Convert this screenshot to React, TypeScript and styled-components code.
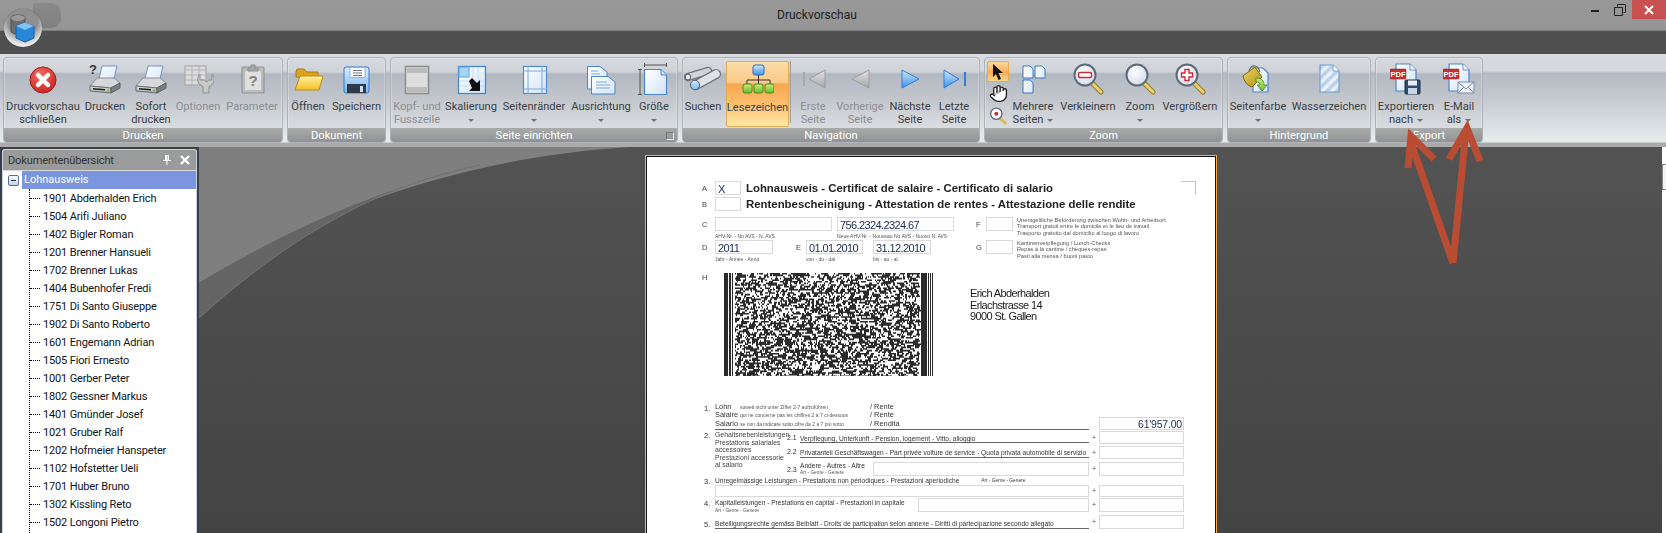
import React, { useMemo } from 'react';
import styled, { createGlobalStyle } from 'styled-components';
import { Hand } from 'lucide-react';

const Global = createGlobalStyle`
  html, body { margin: 0; padding: 0; background: #505050; overflow: hidden; }
  * { box-sizing: border-box; }
`;

const UI = `Roboto, "Liberation Sans", sans-serif`;
const DOC = `"Liberation Sans", Arial, sans-serif`;

const Win = styled.div`position: relative; width: 1666px; height: 533px; overflow: hidden; display: flex; flex-direction: column; font-family: ${UI}; background: #505050;`;
const TitleBar = styled.div`height: 31px; flex: none; display: flex; align-items: flex-start; background: linear-gradient(#989898, #959595); border-bottom: 1px solid #7c7c7c; position: relative;`;
const Title = styled.div`margin-left: 777px; width: 90px; margin-top: 7px; font-size: 12px; line-height: 16px; color: #1e1e1e;`;
const WinControls = styled.div`margin-left: auto; display: flex; align-items: flex-start;`;
const WinBtn = styled.div`width: 25px; height: 19px; display: flex; align-items: center; justify-content: center;`;
const CloseBtn = styled(WinBtn)`width: 34px; background: #c75050;`;
const Strip = styled.div`height: 23px; flex: none; background: #505050;`;
const Ribbon = styled.div`height: 93px; flex: none; display: flex; gap: 4px; padding: 3px 0 0 3px; background: linear-gradient(#d8dbe0 0, #d5d8dd 17px, #b4bac4 19px, #c6cad0 45px, #dfe5e6 78px, #e6ecea 88px, #a9abab 89px, #a9abab 93px);`;
const Group = styled.div<{ $w: number }>`width: ${p => p.$w}px; height: 86px; flex: none; display: flex; flex-direction: column; position: relative; border: 1px solid #aeb2b8; border-radius: 4px; overflow: hidden; box-shadow: inset 0 0 0 1px rgba(255,255,255,.25); background: linear-gradient(#d6d8dc 0, #cfd2d7 14px, #b2b8c2 16px, #c2c6cc 40px, #dadde0 70px);`;
const GroupBody = styled.div`height: 70px; flex: none; display: flex; align-items: stretch;`;
const GroupFooter = styled.div`height: 15px; flex: none; display: flex; align-items: center; justify-content: center; background: linear-gradient(#a9abab, #8f9191); color: #fff; font-size: 11.2px; line-height: 15px; position: relative;`;
const Launcher = styled.span`position: absolute; right: 3px; top: 4px; width: 8px; height: 8px; border: 1px solid #e8e8e8; border-top-color: #777; border-left-color: #777;`;
const Btn = styled.div<{ $w: number; $off?: boolean; $on?: boolean }>`
  width: ${p => p.$w}px; flex: none; display: flex; flex-direction: column; align-items: center;
  padding-top: ${p => p.$on ? 2 : 5}px; margin: ${p => p.$on ? '3px 0 1px 0' : '0'};
  color: ${p => p.$off ? '#8b8e93' : '#3b3e44'};
  font-size: 11.1px; line-height: 13px; white-space: nowrap; text-align: center;
  ${p => p.$on ? `border: 1px solid #e3ac4e; border-radius: 2px; background: linear-gradient(#fddcaa 0, #fbc987 33%, #f8a64e 34%, #fbbf6d 65%, #ffe9a8 100%);` : ''}
`;
const IconSlot = styled.div`height: 37px; width: 100%; flex: none; display: flex; justify-content: center; align-items: flex-start;`;
const Caret = styled.span<{ $inline?: boolean }>`display: inline-block; width: 0; height: 0; border: 3px solid transparent; border-top: 3px solid #6f7278; border-bottom: 0; vertical-align: middle; margin-left: ${p => p.$inline ? 4 : 0}px;`;
const Sep = styled.div`width: 1px; margin: 3px 1px 5px 1px; background: #9da2aa; flex: none;`;
const Spacer = styled.div`width: 3px; flex: none;`;
const Tools = styled.div`width: 22px; margin: 3px 2px 0 2px; flex: none; display: flex; flex-direction: column; gap: 1px;`;
const Tool = styled.div<{ $on?: boolean }>`height: 21px; display: flex; align-items: center; justify-content: center; ${p => p.$on ? `border: 1px solid #e3ac4e; border-radius: 2px; background: linear-gradient(#fdd79e, #f9ad58 55%, #fdd68e);` : ''}`;

const Main = styled.div`flex: 1; min-height: 0; display: flex; background: #3c3f43;`;
const Panel = styled.div`width: 195px; margin: 2px 2px 0 2px; flex: none; background: #fff; border: 1px solid #c8d2e2; border-bottom: 0; border-radius: 3px 3px 0 0; display: flex; flex-direction: column; overflow: hidden;`;
const PanelHead = styled.div`height: 21px; flex: none; display: flex; align-items: center; padding: 0 6px 0 5px; background: #9a9c9b; color: #333; font-size: 11px; letter-spacing: -0.1px; border-bottom: 1px solid #d9d9d9; gap: 8px;`;
const PanelTitle = styled.span`flex: 1;`;
const Root = styled.div`height: 18px; flex: none; display: flex; align-items: center; padding-left: 5px; `;
const Expand = styled.span`width: 11px; height: 11px; flex: none; border: 1px solid #5a6f92; border-radius: 2px; background: linear-gradient(#fff, #c4d0e6); display: flex; align-items: center; justify-content: center;`;
const Minus = styled.span`width: 5px; height: 1px; background: #20304f;`;
const RootLabel = styled.span`margin-left: 3px; flex: 1; height: 18px; line-height: 18px; padding-left: 2px; background: #7b96de; color: #fff; font-size: 11px;`;
const Tree = styled.div`flex: 1; margin-left: 26px; border-left: 1px dotted #000;`;
const Row = styled.div`height: 18px; display: flex; align-items: center; color: #10131a; font-size: 11px; letter-spacing: -0.15px; white-space: nowrap;`;
const Dots = styled.span`width: 10px; margin-right: 3px; border-top: 1px dotted #000; flex: none;`;

const Canvas = styled.div`flex: 1; min-width: 0; position: relative; overflow: hidden; background: linear-gradient(#535353, #434343);`;
const Swoosh = styled.svg`position: absolute; left: 0; top: 0;`;
const Track = styled.div`width: 4px; flex: none; background: #fff; padding-top: 17px;`;
const Thumb = styled.div`height: 26px; border: 1px solid #8a8a8a; border-right: 0; background: #f4f4f4;`;

const Page = styled.div`position: relative; margin: 8px 0 0 446px; width: 572px; height: 420px; background: #fff; border: 1px solid #f6ab55; box-shadow: inset 0 0 0 1px #151515; padding: 25px 0 0 56px; color: #333; font-family: ${DOC}; overflow: hidden;`;
const Ink = styled.div`filter: blur(0.3px);`;
const CornerMark = styled.span`position: absolute; left: 535px; top: 25px; width: 15px; height: 13px; border-top: 1px solid #c4c4c4; border-right: 1px solid #c4c4c4;`;
const HeadRow = styled.div`display: flex; height: 14px; margin-bottom: 2px; align-items: center;`;
const Letter = styled.span<{ $w?: number; $ml?: number }>`width: ${p => p.$w ?? 13}px; margin-left: ${p => p.$ml ?? 0}px; flex: none; font-size: 7.5px; color: #444; align-self: center;`;
const Cell = styled.div<{ $w?: number; $h?: number; $mt?: number; $ml?: number }>`
  ${p => p.$w ? `width:${p.$w}px;` : ''} height: ${p => p.$h ?? 14}px; margin-top: ${p => p.$mt ?? 0}px; margin-left: ${p => p.$ml ?? 0}px;
  flex: none; border: 1px solid #d9d9d9; background: #fff; color: #1c2a52;
  font-size: 11px; line-height: 15px; letter-spacing: -0.6px; padding-left: 2px; white-space: nowrap;
`;
const Heading = styled.div`margin-left: 5px; font-weight: bold; font-size: 11.4px; color: #222; white-space: nowrap;`;
const FieldsRow = styled.div`display: flex; height: 23px; margin-top: 6px; align-items: flex-start;`;
const FieldsRowTight = styled(FieldsRow)`margin-top: 0;`;
const Field = styled.div<{ $w: number; $ml?: number }>`width: ${p => p.$w}px; margin-left: ${p => p.$ml ?? 0}px; flex: none;`;
const Sub = styled.div`font-size: 5px; line-height: 8px; margin-top: 1px; white-space: nowrap; color: #555;`;
const Note = styled.div`margin-left: 4px; font-size: 5.7px; line-height: 6.4px; color: #555; white-space: nowrap;`;
const SideLetter = styled(Letter)`margin-top: 3px; align-self: flex-start;`;
const BarRow = styled.div`display: flex; margin-top: 10px; align-items: flex-start;`;
const BarLetter = styled(Letter)`align-self: flex-start;`;
const Address = styled.div`margin: 15px 0 0 36px; font-size: 11px; line-height: 11.5px; letter-spacing: -0.62px; color: #1a1a1a;`;

const Form = styled.div`margin: 27px 0 0 2px; display: grid; grid-template-columns: 11px 374px 10px 85px;`;
const Num = styled.div<{ $pt?: number }>`font-size: 7.6px; line-height: 9px; padding-top: ${p => p.$pt ?? 1}px;`;
const Main1 = styled.div`height: 27px; border-bottom: 1px solid #666;`;
const LohnLine = styled.div`display: flex; height: 8.3px; line-height: 8.3px; font-size: 7.4px; white-space: nowrap;`;
const Term = styled.span`width: 25px; flex: none;`;
const Tiny = styled.span`font-size: 5px; width: 130px; flex: none; color: #555;`;
const Col = styled.div`display: flex; flex-direction: column;`;
const Grow = styled(Col)`flex: 1;`;
const Plus = styled.div<{ $h?: number; $mt?: number }>`height: ${p => p.$h ?? 14}px; margin-top: ${p => p.$mt ?? 0}px; font-size: 7px; line-height: ${p => p.$h ?? 14}px; color: #555; padding-left: 3px;`;
const Amount = styled(Cell)`text-align: right; padding-right: 1px; font-size: 10.5px; letter-spacing: -0.2px; line-height: 13px;`;
const Sec2 = styled.div`display: flex;`;
const SideLabel = styled.div`width: 72px; flex: none; font-size: 6.9px; line-height: 7.5px; padding-top: 1px; white-space: nowrap; color: #444;`;
const SubRow = styled.div<{ $h: number; $mt?: number }>`display: flex; height: ${p => p.$h}px; margin-top: ${p => p.$mt ?? 0}px; font-size: 6.62px;`;
const SubNum = styled.span`width: 13px; flex: none; font-size: 7px; padding-top: 4px;`;
const Lined = styled.span`flex: 1; border-bottom: 1px solid #666; padding-top: 5px; line-height: 8px; white-space: nowrap; margin-bottom: 1px;`;
const AndereText = styled.div`width: 73px; flex: none; font-size: 6.6px; line-height: 7px;`;
const Under = styled.div`font-size: 4.8px; line-height: 7px; color: #555; white-space: nowrap;`;
const LineText = styled.div`font-size: 6.62px; line-height: 9px; white-space: nowrap; display: flex;`;
const Art = styled.span`font-size: 4.8px; margin-left: 22px;`;
const Row4 = styled.div`display: flex;`;
const Row4Text = styled.div`width: 203px; flex: none; padding-top: 1px;`;
const Main5 = styled.div`height: 15px; border-bottom: 1px solid #666; font-size: 6.62px; padding-top: 6px; line-height: 8px; white-space: nowrap;`;

const Overlay = styled.svg`position: absolute; left: 0; top: 0; pointer-events: none;`;
const OrbTab = styled.div`position: absolute; left: 33px; top: 3px; width: 28px; height: 25px; border-radius: 0 10px 10px 0; background: linear-gradient(#8a8a8a, #7f7f7f);`;
const Orb = styled.div`position: absolute; left: 4px; top: 9px; width: 38px; height: 38px; border-radius: 50%; background: radial-gradient(circle at 50% 30%, #8f8f8f 0 45%, #dedede 70%, #fff 88%, #aaa 100%); display: flex; align-items: center; justify-content: center; box-shadow: 0 0 1px #333;`;
const Defs = styled.svg`position: absolute; width: 0; height: 0;`;

const S = ({ s = 32, children }: { s?: number; children: React.ReactNode }) => (
  <svg width={s} height={s} viewBox={`0 0 ${s} ${s}`}>{children}</svg>
);
const printerBody = (
  <>
    <path d="M13 3 H28 L24 20 H9 Z" fill="url(#paper)" stroke="#6f93c8" />
    <path d="M1 23 L8 15 H25 L31 20 L22 25 Z" fill="#d6d8d9" stroke="#8c8c8c" />
    <path d="M1 23 L22 25 V30 L1 28 Z" fill="url(#greyV)" stroke="#6e6e6e" />
    <path d="M22 25 L31 20 V25 L22 30 Z" fill="#7c7e80" stroke="#5c5c5c" />
    <path d="M4 25 L16 26 V27.5 L4 26.5 Z" fill="#222" />
    <circle cx="19" cy="27.5" r="1" fill="#5fc04a" />
  </>
);
const magnifier = (inner: React.ReactNode) => (
  <S>
    <path d="M20 20 L29 29" stroke="#8a7a30" strokeWidth="5" strokeLinecap="round" />
    <path d="M20 20 L29 29" stroke="#f0cf70" strokeWidth="3" strokeLinecap="round" />
    <circle cx="13" cy="12" r="10.5" fill="url(#lens)" stroke="#5f6a78" strokeWidth="2" />
    {inner}
  </S>
);
const docPath = 'M7 2 H20 L26 8 V29 H7 Z';
const Doc = ({ d = docPath, fill = 'url(#paper)' }: { d?: string; fill?: string }) => <path d={d} fill={fill} stroke="#4b86c8" strokeWidth="1.2" />;
const PdfBadge = () => (
  <>
    <rect x="0" y="6" width="16" height="10" rx="1" fill="#c8302e" stroke="#8f1f1f" strokeWidth=".5" />
    <text x="8" y="14" textAnchor="middle" fontSize="7.5" fontWeight="bold" fontFamily="Liberation Sans" fill="#fff">PDF</text>
  </>
);

const I = {
  close: <S><circle cx="16" cy="17" r="13" fill="url(#red)" stroke="#9b1f1f" /><path d="M11 12 L21 22 M21 12 L11 22" stroke="#fff" strokeWidth="4.5" strokeLinecap="round" /></S>,
  printQ: <S>{printerBody}<text x="0" y="11" fontSize="13" fontWeight="bold" fontFamily="Liberation Sans" fill="#333">?</text></S>,
  print: <S>{printerBody}</S>,
  options: <S><rect x="3" y="3" width="21" height="19" fill="#dcdcdc" stroke="#a3a3a3" /><path d="M3 7 H24 M3 12 H24 M3 17 H24 M10 3 V22 M17 3 V22" stroke="#b3b3b3" /><path d="M18 11 a7.5 7.5 0 0 0 3 12.5 V30 h6 V23.5 a7.5 7.5 0 0 0 3 -12.5 V17 h-3.5 l-1 1.5 h-2 l-1 -1.5 H18 Z" fill="#c8c8c8" stroke="#8f8f8f" /></S>,
  param: <S><rect x="6" y="4" width="22" height="26" rx="1" fill="#bcbcbc" stroke="#949494" strokeWidth="1.2" /><rect x="9" y="8" width="16" height="19" fill="#e0e0e0" /><path d="M12 5 h3 v-3 h4 v3 h3 v3 h-10 Z" fill="#a6a6a6" stroke="#8c8c8c" /><text x="17" y="23" textAnchor="middle" fontSize="15" fontWeight="bold" fontFamily="Liberation Sans" fill="#7d7d7d">?</text></S>,
  open: <S><path d="M4 9 L5 6 H12 L15 9 H26 V14 H4 Z" fill="#dca31c" stroke="#a97a12" /><path d="M8 13 H31 L27 27 H3 Z" fill="url(#yellow)" stroke="#b98a18" /></S>,
  save: <S><rect x="3" y="4" width="25" height="26" rx="2" fill="url(#sky)" stroke="#3a78c4" /><rect x="9" y="4.5" width="15" height="10" fill="#fff" stroke="#9ab3d2" /><path d="M12 7.5 H21 M12 10 H21 M12 12.5 H21" stroke="#6a7788" /><rect x="6" y="21" width="19" height="9" fill="#2e3a4a" /><rect x="19" y="23" width="3" height="6" fill="#cfe0f2" /></S>,
  header: <S><rect x="4.5" y="3.5" width="23" height="27" fill="#dedede" stroke="#8e8e8e" strokeWidth="1.6" /><rect x="6" y="5" width="20" height="5" fill="#bcbcbc" /><rect x="6" y="24" width="20" height="5" fill="#bcbcbc" /></S>,
  scale: <S><rect x="3.5" y="3.5" width="27" height="27" fill="url(#paper)" stroke="#3f8ad0" strokeWidth="1.3" /><rect x="4" y="4" width="10" height="10" fill="#a8d4f5" stroke="#5ea2e0" /><path d="M4 18 H30 M4 23 H30 M18 4 V30 M23 4 V30" stroke="#c3def5" /><path d="M14 18 L17 15 L22 20 L25 17 V28 H14 L17 25 Z" fill="#111" /></S>,
  margins: <S><rect x="5.5" y="3.5" width="23" height="27" fill="url(#paper)" stroke="#4b8ad0" strokeWidth="1.2" /><path d="M5 8 H29 M5 26 H29 M10 3 V31 M24 3 V31" stroke="#76a8de" /></S>,
  orient: <S><path d="M2.5 3.5 H15 L22 9 V26 H2.5 Z" fill="url(#paper)" stroke="#4b86c8" /><path d="M6 8 H13 M6 11 H15" stroke="#7fa7d6" /><path d="M6.5 13.5 H23 L30 19 V31 H6.5 Z" fill="url(#paper)" stroke="#4b86c8" /><path d="M11 19 H22 M11 22 H25 M11 25 H25" stroke="#7fa7d6" /></S>,
  size: <S s={34}><path d="M7.5 0 V4 M29.5 0 V4 M7.5 2 H29.5 M1 6.5 H5 M3 6.5 V31.5 M1 31.5 H5" stroke="#555" fill="none" /><Doc d="M7.5 6.5 H24 L29.5 12 V31.5 H7.5 Z" /><path d="M24 6.5 V12 H29.5" fill="#cfdff3" stroke="#4b86c8" /></S>,
  binoc: <S s={38}><path d="M4 14 L24 8" stroke="#70757c" strokeWidth="8.5" strokeLinecap="round" /><path d="M4 14 L24 8" stroke="#d0d4d8" strokeWidth="6" strokeLinecap="round" /><path d="M12 22 L32 11" stroke="#70757c" strokeWidth="10" strokeLinecap="round" /><path d="M12 22 L32 11" stroke="#dfe2e6" strokeWidth="7.5" strokeLinecap="round" /><ellipse cx="11" cy="22" rx="4.5" ry="4.8" fill="url(#sky)" stroke="#4a5a70" /><ellipse cx="4" cy="14" rx="2.6" ry="3" fill="#eef2f7" stroke="#555" /></S>,
  tree: <S><rect x="11" y="1" width="11" height="10" rx="2" fill="url(#blue)" stroke="#2e6bb8" /><path d="M16.5 11 V16 M5 20 V16 H28 V20 M16.5 16 V20" stroke="#333" fill="none" /><rect x="1" y="20" width="9" height="9" rx="2" fill="url(#green)" stroke="#4f8a1c" /><rect x="12" y="20" width="9" height="9" rx="2" fill="url(#green)" stroke="#4f8a1c" /><rect x="23" y="20" width="9" height="9" rx="2" fill="url(#green)" stroke="#4f8a1c" /></S>,
  first: <S><path d="M7 9 V23" stroke="#a8a8a8" strokeWidth="2" /><path d="M28 7 V25 L12 16 Z" fill="url(#greyV)" stroke="#9b9b9b" /></S>,
  prev: <S><path d="M25 7 V25 L8 16 Z" fill="url(#greyV)" stroke="#9b9b9b" /></S>,
  next: <S><path d="M8 7 V25 L25 16 Z" fill="url(#blue)" stroke="#2f7fd6" /></S>,
  last: <S><path d="M6 7 V25 L21 16 Z" fill="url(#blue)" stroke="#2f7fd6" /><path d="M27 9 V23" stroke="#2f7fd6" strokeWidth="2" /></S>,
  pages: <S><path d="M6 3 H13 L16 6 V15 H6 Z M18 3 H25 L28 6 V15 H18 Z M6 17 H13 L16 20 V30 H6 Z" fill="url(#paper)" stroke="#3f79c2" /></S>,
  zoomOut: magnifier(<rect x="6.5" y="9.5" width="13" height="5" rx="1.5" fill="#fff" stroke="#c0303a" strokeWidth="1.5" />),
  zoom: magnifier(null),
  zoomIn: magnifier(<path d="M11 6.5 H15 V10 H18.5 V14 H15 V17.5 H11 V14 H7.5 V10 H11 Z" fill="#fff" stroke="#d02a34" strokeWidth="1.4" />),
  bucket: <S s={34}><Doc d="M12 5 H22 L27 10 V29 H12 Z" /><path d="M2 13 L14 4 L21 14 L11 24 Q4 22 2 13 Z" fill="url(#gold)" stroke="#7e6a12" /><path d="M8 9 C9 2 16 0 19 9" fill="none" stroke="#777" strokeWidth="1.3" /><path d="M15 15 C21 15 23 18 23 22 H26 L21 28 L16 22 H19 C19 20 18 19 15 19 Z" fill="url(#green)" stroke="#3b7d14" strokeWidth=".7" /></S>,
  water: <S><path d={docPath} fill="url(#hatch)" stroke="#6fa0d0" strokeWidth="1.2" /><path d="M20 2 V8 H26" fill="#fff" stroke="#6fa0d0" /></S>,
  pdfSave: <S><Doc d="M6 1 H20 L26 7 V28 H6 Z" /><path d="M20 1 V7 H26" fill="#fff" stroke="#6d8fc6" /><PdfBadge /><rect x="15" y="17" width="15" height="14" rx="1" fill="#2f4a6e" stroke="#1e2f46" /><rect x="18" y="17.5" width="9" height="5" fill="#e8eef6" /><rect x="18" y="25" width="9" height="6" fill="#c5d6ea" /></S>,
  pdfMail: <S><Doc d="M6 1 H20 L26 7 V28 H6 Z" /><path d="M20 1 V7 H26" fill="#fff" stroke="#6d8fc6" /><PdfBadge /><rect x="15" y="19" width="16" height="11" fill="#eef2f8" stroke="#7a8db0" /><path d="M15 19 L23 26 L31 19 M15 30 L21 24 M31 30 L25 24" fill="none" stroke="#7a8db0" /></S>,
};

const BarSvg = styled.svg`flex: none;`;
const Barcode = () => {
  const d = useMemo(() => {
    let seed = 1337;
    const rnd = () => { seed = (seed * 16807) % 2147483647; return seed / 2147483647; };
    let out = '';
    const rect = (x: number, y: number, w: number, h: number) => { out += `M${x} ${y}h${w}v${h}h${-w}z`; };
    rect(0, 0, 4, 103); rect(5, 0, 2, 103); rect(8, 0, 1, 103);
    rect(197, 0, 6, 103); rect(204, 0, 1, 103); rect(206, 0, 1, 103); rect(208, 0, 1, 103);
    for (let y = 0; y < 103; y += 1.6) {
      let x = 11;
      while (x < 195) {
        const w = 1 + Math.floor(rnd() * 2.4);
        if (rnd() > 0.46) rect(x, y, w, 1.6);
        x += w;
      }
    }
    return out;
  }, []);
  return <BarSvg width="210" height="103" viewBox="0 0 210 103"><path d={d} fill="#2a2a2a" /></BarSvg>;
};

const names = ['1901 Abderhalden Erich', '1504 Arifi Juliano', '1402 Bigler Roman', '1201 Brenner Hansueli', '1702 Brenner Lukas', '1404 Bubenhofer Fredi', '1751 Di Santo Giuseppe', '1902 Di Santo Roberto', '1601 Engemann Adrian', '1505 Fiori Ernesto', '1001 Gerber Peter', '1802 Gessner Markus', '1401 Gmünder Josef', '1021 Gruber Ralf', '1202 Hofmeier Hanspeter', '1102 Hofstetter Ueli', '1701 Huber Bruno', '1302 Kissling Reto', '1502 Longoni Pietro', ''];

type B = { w: number; icon: React.ReactNode; a: string; b?: string; caret?: 'own' | 'inline'; off?: boolean; on?: boolean };
const RB = ({ w, icon, a, b, caret, off, on }: B) => (
  <Btn $w={w} $off={off} $on={on}>
    <IconSlot>{icon}</IconSlot>
    <span>{a}</span>
    <span>{b}{caret === 'inline' && <Caret $inline />}{caret === 'own' && <Caret />}{!b && !caret && '\u00a0'}</span>
  </Btn>
);

export default function App() {
  return (
    <Win>
      <Global />
      <Defs>
        <defs>
          <linearGradient id="paper" x1="0" y1="0" x2="1" y2="1"><stop offset="0" stopColor="#fff" /><stop offset="1" stopColor="#d3e4f8" /></linearGradient>
          <linearGradient id="greyV" x1="0" y1="0" x2="0" y2="1"><stop offset="0" stopColor="#e2e2e2" /><stop offset="1" stopColor="#a8a8a8" /></linearGradient>
          <radialGradient id="red" cx=".4" cy=".3" r=".8"><stop offset="0" stopColor="#f56a5f" /><stop offset="1" stopColor="#c5201f" /></radialGradient>
          <linearGradient id="yellow" x1="0" y1="0" x2="0" y2="1"><stop offset="0" stopColor="#fff0a0" /><stop offset="1" stopColor="#f3bf24" /></linearGradient>
          <linearGradient id="blue" x1="0" y1="0" x2="0" y2="1"><stop offset="0" stopColor="#cfe5fb" /><stop offset="1" stopColor="#3d93e8" /></linearGradient>
          <linearGradient id="sky" x1="0" y1="0" x2="0" y2="1"><stop offset="0" stopColor="#d8ecfd" /><stop offset="1" stopColor="#7ab8f2" /></linearGradient>
          <linearGradient id="green" x1="0" y1="0" x2="0" y2="1"><stop offset="0" stopColor="#c9ec7f" /><stop offset="1" stopColor="#6cbb2a" /></linearGradient>
          <linearGradient id="gold" x1="0" y1="0" x2="1" y2="1"><stop offset="0" stopColor="#f5dd62" /><stop offset="1" stopColor="#a88a14" /></linearGradient>
          <radialGradient id="lens" cx=".4" cy=".35" r=".8"><stop offset="0" stopColor="#fff" /><stop offset="1" stopColor="#c7d6e6" /></radialGradient>
          <pattern id="hatch" width="7" height="7" patternUnits="userSpaceOnUse" patternTransform="rotate(45)"><rect width="7" height="7" fill="#e9f1fa" /><rect width="3.5" height="7" fill="#b9d0e8" /></pattern>
        </defs>
      </Defs>
      <TitleBar>
        <Title>Druckvorschau</Title>
        <WinControls>
          <WinBtn><svg width="10" height="10" viewBox="0 0 10 10"><rect x="1" y="5" width="8" height="2" fill="#222" /></svg></WinBtn>
          <WinBtn><svg width="12" height="12" viewBox="0 0 12 12"><path d="M3.5 2.5 V.5 H11.5 V8.5 H9.5 M.5 3.5 H8.5 V11.5 H.5 Z" fill="none" stroke="#222" /></svg></WinBtn>
          <CloseBtn><svg width="10" height="10" viewBox="0 0 10 10"><path d="M1 1 L9 9 M9 1 L1 9" stroke="#fff" strokeWidth="2" /></svg></CloseBtn>
        </WinControls>
      </TitleBar>
      <Strip />
      <Ribbon>
        <Group $w={280}>
          <GroupBody>
            <RB w={78} icon={I.close} a="Druckvorschau" b="schließen" />
            <RB w={46} icon={I.printQ} a="Drucken" />
            <RB w={46} icon={I.print} a="Sofort" b="drucken" />
            <RB w={48} off icon={I.options} a="Optionen" />
            <RB w={60} off icon={I.param} a="Parameter" />
          </GroupBody>
          <GroupFooter>Drucken</GroupFooter>
        </Group>
        <Group $w={99}>
          <GroupBody>
            <RB w={40} icon={I.open} a="Öffnen" />
            <RB w={57} icon={I.save} a="Speichern" />
          </GroupBody>
          <GroupFooter>Dokument</GroupFooter>
        </Group>
        <Group $w={288}>
          <GroupBody>
            <RB w={52} off icon={I.header} a="Kopf- und" b="Fusszeile" />
            <RB w={56} icon={I.scale} a="Skalierung" caret="own" />
            <RB w={70} icon={I.margins} a="Seitenränder" caret="own" />
            <RB w={64} icon={I.orient} a="Ausrichtung" caret="own" />
            <RB w={42} icon={I.size} a="Größe" caret="own" />
          </GroupBody>
          <GroupFooter>Seite einrichten<Launcher /></GroupFooter>
        </Group>
        <Group $w={298}>
          <GroupBody>
            <RB w={40} icon={I.binoc} a="Suchen" />
            <Spacer />
            <RB w={63} on icon={I.tree} a="Lesezeichen" />
            <Sep />
            <RB w={42} off icon={I.first} a="Erste" b="Seite" />
            <RB w={52} off icon={I.prev} a="Vorherige" b="Seite" />
            <RB w={48} icon={I.next} a="Nächste" b="Seite" />
            <RB w={40} icon={I.last} a="Letzte" b="Seite" />
          </GroupBody>
          <GroupFooter>Navigation</GroupFooter>
        </Group>
        <Group $w={239}>
          <GroupBody>
            <Tools>
              <Tool $on><svg width="16" height="18" viewBox="0 0 16 18"><path d="M3 1 L13 10 H8.5 L11 16 L8.5 17 L6 11 L3 14 Z" fill="#111" /></svg></Tool>
              <Tool><Hand size={19} fill="#fff" color="#222" strokeWidth={1.7} /></Tool>
              <Tool><svg width="18" height="18" viewBox="0 0 32 32"><path d="M20 20 L29 29" stroke="#e0b850" strokeWidth="5" strokeLinecap="round" /><circle cx="13" cy="12" r="10" fill="#fff" stroke="#5f6a78" strokeWidth="2.5" /><circle cx="13" cy="12" r="3.5" fill="#d02a34" /></svg></Tool>
            </Tools>
            <RB w={44} icon={I.pages} a="Mehrere" b="Seiten" caret="inline" />
            <RB w={66} icon={I.zoomOut} a="Verkleinern" />
            <RB w={38} icon={I.zoom} a="Zoom" caret="own" />
            <RB w={62} icon={I.zoomIn} a="Vergrößern" />
          </GroupBody>
          <GroupFooter>Zoom</GroupFooter>
        </Group>
        <Group $w={144}>
          <GroupBody>
            <RB w={60} icon={I.bucket} a="Seitenfarbe" caret="own" />
            <RB w={82} icon={I.water} a="Wasserzeichen" />
          </GroupBody>
          <GroupFooter>Hintergrund</GroupFooter>
        </Group>
        <Group $w={108}>
          <GroupBody>
            <RB w={60} icon={I.pdfSave} a="Exportieren" b="nach" caret="inline" />
            <RB w={46} icon={I.pdfMail} a="E-Mail" b="als" caret="inline" />
          </GroupBody>
          <GroupFooter>Export</GroupFooter>
        </Group>
      </Ribbon>
      <Main>
        <Panel>
          <PanelHead>
            <PanelTitle>Dokumentenübersicht</PanelTitle>
            <svg width="10" height="12" viewBox="0 0 10 12"><path d="M3 1 H7 V6 H9 V7 H5.5 V11 H4.5 V7 H1 V6 H3 Z M5.5 2 V6 H6 V2 Z" fill="#fff" fillRule="evenodd" /></svg>
            <svg width="10" height="10" viewBox="0 0 10 10"><path d="M1 1 L9 9 M9 1 L1 9" stroke="#fff" strokeWidth="2.4" /></svg>
          </PanelHead>
          <Root><Expand><Minus /></Expand><RootLabel>Lohnausweis</RootLabel></Root>
          <Tree>
            {names.map((n, i) => <Row key={i}>{n && <Dots />}{n}</Row>)}
          </Tree>
        </Panel>
        <Canvas>
          <Swoosh width="640" height="200" viewBox="0 0 640 200">
            <path d="M0 0 H430 C280 10 140 52 0 136 Z" fill="#7f7f7f" />
            <path d="M0 136 C105 73 190 40 281 18 C180 38 90 90 0 171 Z" fill="#656565" />
            <path d="M281 18 C180 38 90 90 0 171" fill="none" stroke="#747474" />
          </Swoosh>
          <Page>
            <CornerMark />
            <Ink>
              <HeadRow><Letter>A</Letter><Cell $w={26}>X</Cell><Heading>Lohnausweis - Certificat de salaire - Certificato di salario</Heading></HeadRow>
              <HeadRow><Letter>B</Letter><Cell $w={26} /><Heading>Rentenbescheinigung - Attestation de rentes - Attestazione delle rendite</Heading></HeadRow>
              <FieldsRow>
                <SideLetter>C</SideLetter>
                <Field $w={117}><Cell /><Sub>AHV-Nr. - No AVS - N. AVS</Sub></Field>
                <Field $w={117} $ml={5}><Cell>756.2324.2324.67</Cell><Sub>Neue AHV-Nr. - Nouveau No AVS - Nuovo N. AVS</Sub></Field>
                <SideLetter $w={10} $ml={22}>F</SideLetter>
                <Cell $w={27} />
                <Note>Unentgeltliche Beförderung zwischen Wohn- und Arbeitsort<br />Transport gratuit entre le domicile et le lieu de travail<br />Trasporto gratuito dal domicilio al luogo di lavoro</Note>
              </FieldsRow>
              <FieldsRowTight>
                <SideLetter>D</SideLetter>
                <Field $w={58}><Cell>2011</Cell><Sub>Jahr - Année - Anno</Sub></Field>
                <SideLetter $w={10} $ml={23}>E</SideLetter>
                <Field $w={57}><Cell>01.01.2010</Cell><Sub>von - du - dal</Sub></Field>
                <Field $w={58} $ml={10}><Cell>31.12.2010</Cell><Sub>bis - au - al</Sub></Field>
                <SideLetter $w={10} $ml={45}>G</SideLetter>
                <Cell $w={27} />
                <Note>Kantinenverpflegung / Lunch-Checks<br />Repas à la cantine / chèques-repas<br />Pasti alla mensa / buoni pasto</Note>
              </FieldsRowTight>
              <BarRow>
                <BarLetter $w={22}>H</BarLetter>
                <Barcode />
                <Address>Erich Abderhalden<br />Erlachstrasse 14<br />9000 St. Gallen</Address>
              </BarRow>
              <Form>
                <Num>1.</Num>
                <Main1>
                  <LohnLine><Term>Lohn</Term><Tiny>soweit nicht unter Ziffer 2-7 aufzuführen</Tiny>/ Rente</LohnLine>
                  <LohnLine><Term>Salaire</Term><Tiny>qui ne concerne pas les chiffres 2 à 7 ci-dessous</Tiny>/ Rente</LohnLine>
                  <LohnLine><Term>Salario</Term><Tiny>se non da indicare sotto cifre da 2 a 7 più sotto</Tiny>/ Rendita</LohnLine>
                </Main1>
                <div />
                <Amount $h={13} $mt={14}>61'957.00</Amount>

                <Num>2.</Num>
                <Sec2>
                  <SideLabel>Gehaltsnebenleistungen<br />Prestations salariales<br />accessoires<br />Prestazioni accessorie<br />al salario</SideLabel>
                  <Grow>
                    <SubRow $h={14}><SubNum>2.1</SubNum><Lined>Verpflegung, Unterkunft - Pension, logement - Vitto, alloggio</Lined></SubRow>
                    <SubRow $h={15}><SubNum>2.2</SubNum><Lined>Privatanteil Geschäftswagen - Part privée voiture de service - Quota privata automobile di servizio</Lined></SubRow>
                    <SubRow $h={14} $mt={3}><SubNum>2.3</SubNum><AndereText>Andere - Autres - Altre<Under>Art - Genre - Genere</Under></AndereText><Cell $w={216} /></SubRow>
                  </Grow>
                </Sec2>
                <Col><Plus $h={13} $mt={1}>+</Plus><Plus $h={13} $mt={2}>+</Plus><Plus $mt={3}>+</Plus></Col>
                <Col><Cell $h={13} $mt={1} /><Cell $h={13} $mt={2} /><Cell $mt={3} /></Col>

                <Num>3.</Num>
                <Col><LineText>Unregelmässige Leistungen - Prestations non périodiques - Prestazioni aperiodiche<Art>Art - Genre - Genere</Art></LineText><Cell $h={12} /></Col>
                <Plus $h={12} $mt={9}>+</Plus>
                <Cell $h={12} $mt={9} />

                <Num $pt={2}>4.</Num>
                <Row4><Row4Text><LineText>Kapitalleistungen - Prestations en capital - Prestazioni in capitale</LineText><Under>Art - Genre - Genere</Under></Row4Text><Cell $w={171} $mt={1} /></Row4>
                <Plus $mt={1}>+</Plus>
                <Cell $mt={1} />

                <Num $pt={6}>5.</Num>
                <Main5>Beteiligungsrechte gemäss Beiblatt - Droits de participation selon annexe - Diritti di partecipazione secondo allegato</Main5>
                <Plus $mt={1}>+</Plus>
                <Cell $mt={1} />
              </Form>
            </Ink>
          </Page>
        </Canvas>
        <Track><Thumb /></Track>
      </Main>
      <OrbTab />
      <Orb>
        <svg width="30" height="30" viewBox="0 0 30 30">
          <path d="M3 5 C3 1 17 1 17 5 V18 C17 22 3 22 3 18 Z" fill="#6d6d6d" stroke="#4d4d4d" />
          <ellipse cx="10" cy="5" rx="7" ry="3" fill="#9a9a9a" />
          <path d="M16 10 L26 13 V25 L17 29 L8 25 V13 Z" fill="#2a86d8" stroke="#1663a8" />
          <path d="M8 13 L17 9.5 L26 13 L17 17 Z" fill="#7fc3f5" />
        </svg>
      </Orb>
      <Overlay width="1666" height="533" viewBox="0 0 1666 533">
        <g fill="none" stroke="#b94c32" strokeWidth="7" strokeLinejoin="miter">
          <path d="M1453 263 L1410 140" />
          <path d="M1453 263 L1466 130" />
          <path d="M1408 168 L1411 136 L1434 159" />
          <path d="M1449 159 L1467 128 L1480 161" />
        </g>
      </Overlay>
    </Win>
  );
}
